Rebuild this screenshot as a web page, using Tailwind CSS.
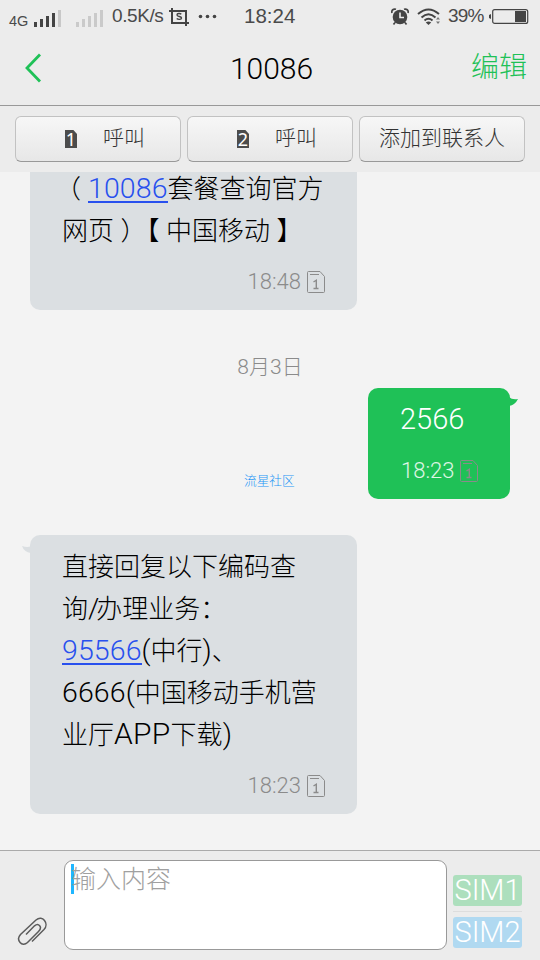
<!DOCTYPE html>
<html lang="zh-CN">
<head>
<meta charset="utf-8">
<title>10086</title>
<script src="https://cdn.jsdelivr.net/npm/@tailwindcss/browser@4"></script>
</head>
<body class="w-[540px] h-[960px] overflow-hidden flex flex-col bg-[#f3f3f3] font-light font-['Roboto','Noto_Sans_CJK_SC',sans-serif] text-black">
<svg class="hidden">
  <symbol id="sim" viewBox="0 0 18 22"><path d="M.5 1.500a1 1 0 0 1 1-1H13l4.500 5V20.500a1 1 0 0 1-1 1h-15a1 1 0 0 1-1-1zM3 3.500h9" fill="none" stroke="currentColor"/><path d="M6.500 11L9.300 9.200V18M6.500 17.500h5" fill="none" stroke="currentColor" stroke-width="1.400"/></symbol>
</svg>
<header class="h-[106px] shrink-0 bg-[#ececec] border-b border-[#999] flex flex-col">
  <div class="h-[33px] flex text-[#4a4a4a] font-normal whitespace-nowrap">
    <span class="ml-[9px] w-[25px] pt-[13px] text-[14.500px] leading-4 font-['Liberation_Sans']">4G</span>
    <svg class="w-[28px] h-[33px]" viewBox="0 0 28 33"><path d="M0 22h3v5H0zM6 19h3v8H6zM12 16h3v11h-3zM18 13h3v14h-3z" fill="#444"/><path d="M24 10h3v17h-3z" fill="#c8c8c8"/></svg>
    <svg class="ml-[14px] w-[28px] h-[33px]" viewBox="0 0 28 33"><path d="M0 22h3v5H0zM6 19h3v8H6zM12 16h3v11h-3zM18 13h3v14h-3zM24 10h3v17h-3z" fill="#cacaca"/></svg>
    <span class="ml-[8px] w-[57px] pt-[5px] text-[19px] leading-[22px] tracking-[-0.4px] font-['Liberation_Sans']">0.5K/s</span>
    <svg class="w-[20px] h-[33px]" viewBox="0 0 20 33" fill="none" stroke="#444" stroke-width="2"><path d="M0 11h17v15M3 8v15h17"/><path d="M12.300 14.300c-1-1-4.300-1.200-4.300.7 0 2 4.500 1.100 4.500 3 0 1.900-3.600 1.700-4.800.5" stroke-width="1.400"/></svg>
    <svg class="ml-[9px] w-[20px] h-[33px]" viewBox="0 0 20 33" fill="#444"><circle cx="2.500" cy="16.500" r="1.800"/><circle cx="9.500" cy="16.500" r="1.800"/><circle cx="16.500" cy="16.500" r="1.800"/></svg>
    <span class="ml-[26px] w-[147px] pt-[5px] text-[20.500px] leading-[22px] font-['Liberation_Sans']">18:24</span>
    <svg class="w-[19px] h-[33px]" viewBox="0 0 19 33"><circle cx="9" cy="17" r="7.300" fill="#444"/><path d="M1 13c-.8-3 1.500-4.500 4-3.700M17 13c.8-3-1.500-4.500-4-3.700M4 22.500l-1.500 2M14 22.500l1.500 2" fill="none" stroke="#444" stroke-width="1.700"/><path d="M9 12.500v5h4" fill="none" stroke="#ececec" stroke-width="1.600"/></svg>
    <svg class="ml-[7px] w-[24px] h-[33px]" viewBox="0 0 24 33" fill="none" stroke="#444" stroke-width="2"><path d="M1 14q10.500-9 21 0M4.500 17.500q7-6.500 14 0M7.500 20.500q4-3.500 8 0"/><path d="M8.800 22.500q2.700-2 5.400 0l-2.700 2.500z" fill="#444" stroke="none"/><path d="M21 17l2 2.500h-4zM21 24l2-2.500h-4z" fill="#777" stroke="none"/></svg>
    <span class="ml-[7px] w-[41px] pt-[5px] text-[19px] leading-[22px] tracking-[-0.8px] font-['Liberation_Sans']">39%</span>
    <svg class="w-[40px] h-[33px]" viewBox="0 0 40 33"><rect x="3.700" y="9.600" width="35" height="13.800" rx="2" fill="none" stroke="#444" stroke-width="1.200"/><path d="M26 11h11v11H26zM0 15l2-1v5l-2-1z" fill="#444"/></svg>
  </div>
  <div class="flex-1 grid grid-cols-[120px_1fr_120px] items-center">
    <svg class="ml-[22px] w-[20px] h-[30px] -mt-[3px]" viewBox="0 0 20 30" fill="none" stroke="#1fc157" stroke-width="2.800"><path d="M18 1.500L5 15l13 13.500"/></svg>
    <h1 class="text-center text-[30px] leading-9 pl-[3px]">10086</h1>
    <button class="text-right pr-[13px] text-[28px] leading-9 -mt-[3px] text-[#1fc157]">编辑</button>
  </div>
</header>
<nav class="h-[66px] shrink-0 bg-[#ececec] px-[15px] pt-[10px] flex gap-[6px] text-[21px] text-[#333] whitespace-nowrap">
  <button class="w-[166px] h-[46px] rounded-[6px] border border-[#c2c2c2] border-b-[#999] bg-linear-to-b from-[#f7f7f7] to-[#e7e7e7] flex items-center pl-[49px]">
    <span class="w-[12px] h-[18px] bg-[#4c4c4c] text-white text-[18px] leading-[18px] font-normal font-['Noto_Sans'] flex justify-center [clip-path:polygon(0_0,70%_0,100%_22%,100%_100%,0_100%)]">1</span><span class="ml-[26px] -mt-px">呼叫</span>
  </button>
  <button class="w-[166px] h-[46px] rounded-[6px] border border-[#c2c2c2] border-b-[#999] bg-linear-to-b from-[#f7f7f7] to-[#e7e7e7] flex items-center pl-[49px]">
    <span class="w-[12px] h-[18px] bg-[#4c4c4c] text-white text-[18px] leading-[18px] font-normal font-['Noto_Sans'] flex justify-center [clip-path:polygon(0_0,70%_0,100%_22%,100%_100%,0_100%)]">2</span><span class="ml-[26px] -mt-px">呼叫</span>
  </button>
  <button class="w-[166px] h-[46px] rounded-[6px] border border-[#c2c2c2] border-b-[#999] bg-linear-to-b from-[#f7f7f7] to-[#e7e7e7] flex items-center justify-center"><span class="-mt-px">添加到联系人</span></button>
</nav>
<main class="h-[678px] shrink-0 flex flex-col whitespace-nowrap text-[26px] leading-[42px] [text-spacing-trim:space-all]">
  <section class="ml-[30px] w-[327px] h-[138px] bg-[#dbdfe2] rounded-b-[10px] px-[32px]">
    <div class="-mt-[4px]"><span class="inline-block w-[13px] ml-[6px] mr-[7px] [font-feature-settings:'halt']">（</span><a class="text-[28.500px] tracking-[0.1px] text-[#2850ee] border-b-2 border-[#2850ee] inline-block leading-[25px]">10086</a>套餐查询官方</div>
    <div>网页<span class="inline-block w-[13px] mx-[6.500px] [font-feature-settings:'halt']">）</span><span class="inline-block w-[13px] mx-[6.500px] [font-feature-settings:'halt']">【</span>中国移动<span class="inline-block w-[13px] mx-[6.500px] [font-feature-settings:'halt']">】</span></div>
    <div class="flex justify-end items-center h-[60px] gap-[6px] text-[22px] text-[#8b8b8b]"><span>18:48</span><svg class="w-[18px] h-[22px]"><use href="#sim"/></svg></div>
  </section>
  <div class="mt-[36px] h-[42px] text-center text-[21px] text-[#8b8b8b]">8月3日</div>
  <section class="relative ml-[368px] w-[142px] h-[111px] bg-[#1fc157] rounded-[10px] pl-[32px] text-white">
    <svg class="absolute left-[141px] top-[9px] w-[10px] h-[10px]" viewBox="0 0 10 10"><path d="M0 0q3 3 9 2-3 6-9 7z" fill="#1fc157"/></svg>
    <div class="pt-[10px] text-[29px]">2566</div>
    <div class="pl-px flex items-center h-[62px] gap-[6px] text-[22px] text-white/85"><span>18:23</span><svg class="w-[18px] h-[22px] text-[#8b8b8b]"><use href="#sim"/></svg></div>
    <span class="absolute left-[-124px] top-[83px] text-[12.700px] leading-5 font-light text-[#1e96f5]">流星社区</span>
  </section>
  <section class="relative mt-[36px] ml-[30px] w-[327px] h-[279px] bg-[#dbdfe2] rounded-[10px] px-[32px] pt-[11px]">
    <svg class="absolute left-[-8px] top-[11px] w-[9px] h-[8px]" viewBox="0 0 9 8"><path d="M9 0Q6 2 0 0q2 6 9 7z" fill="#dbdfe2"/></svg>
    <div>直接回复以下编码查</div>
    <div>询<span class="text-[28.500px] leading-none tracking-[-3px]">/</span>办理业务：</div>
    <div><a class="text-[28.500px] tracking-[0.1px] text-[#2850ee] border-b-2 border-[#2850ee] inline-block leading-[25px]">95566</a><span class="text-[28px] leading-none">(</span>中行<span class="text-[28px] leading-none">)</span>、</div>
    <div><span class="text-[28.500px] leading-none tracking-[0.1px]">6666(</span>中国移动手机营</div>
    <div>业厅<span class="text-[30px] leading-none tracking-[0.3px]">APP</span>下载<span class="text-[28.500px] leading-none">)</span></div>
    <div class="flex justify-end items-center h-[60px] gap-[6px] text-[22px] text-[#8b8b8b]"><span>18:23</span><svg class="w-[18px] h-[22px]"><use href="#sim"/></svg></div>
  </section>
</main>
<footer class="h-[110px] shrink-0 bg-[#ececec] border-t border-[#aaa] flex">
  <svg class="ml-[16px] mt-[64px] w-[33px] h-[32px]" viewBox="0 0 33 32" fill="none" stroke="#5c5c5c" stroke-width="1.500"><path d="M16 26.500L28 14.500C33.500 8.500 26.500-.5 20 5L4.500 19.500C-.5 25 6 32.500 11.500 27.500L22.500 16.500C27 12 22.500 7.500 18.500 10.800L10 19.500"/></svg>
  <div class="ml-[15px] mt-[9px] w-[383px] h-[90px] rounded-[9px] border border-[#999] bg-white pl-[6px] pt-[3px] flex items-start text-[25px] leading-[30px] text-[#a0a0a0]"><i class="w-[3px] h-[30px] bg-[#1fb6ff]"></i><span class="-ml-[3px] mt-px">输入内容</span></div>
  <div class="ml-[6px] mt-[24px] w-[69px] flex flex-col text-white text-[29px] leading-[31px] text-center whitespace-nowrap">
    <span class="h-[31px] rounded-[3px] bg-[#addfbd]">SIM1</span>
    <span class="h-px mt-[5px] mb-[5px] bg-[#ddd]"></span>
    <span class="h-[31px] rounded-[3px] bg-[#b0d9f1]">SIM2</span>
  </div>
</footer>
</body>
</html>
